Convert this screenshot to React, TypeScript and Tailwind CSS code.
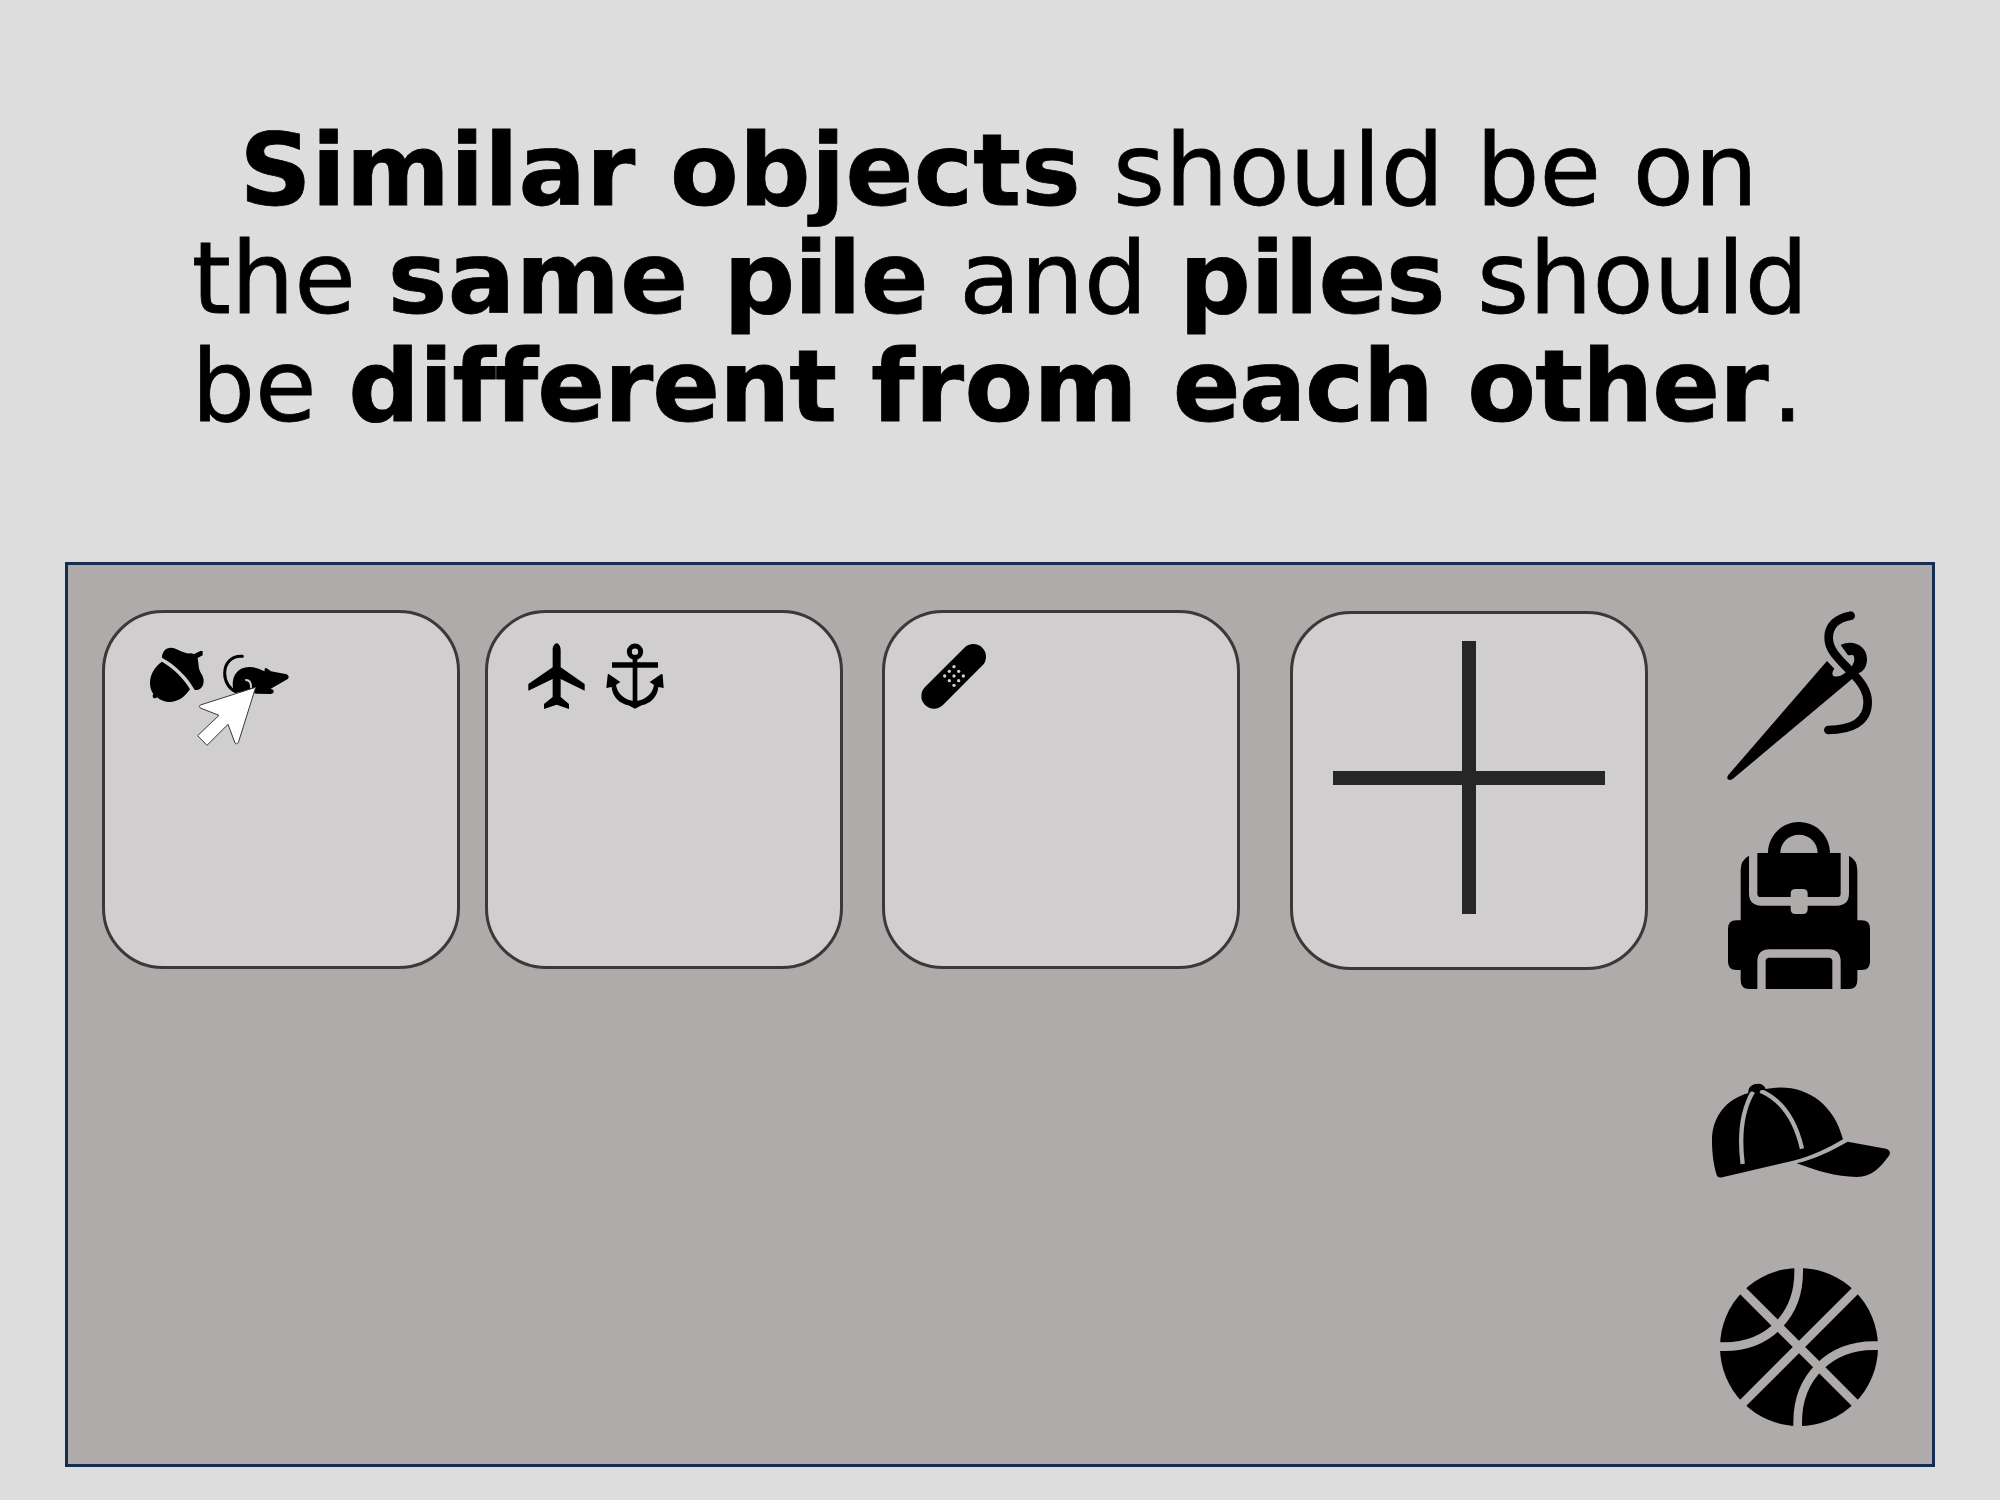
import type { ReactNode } from "react";

function Acorn() {
  return (
    <svg className="h-[60px] w-[60px]" viewBox="165 129 180 180">
      <path d="M216 185C196 199 180 221 180 249C180 262 183 272 190 282C186 287 188 296 196 295L201 292C213 302 226 306 238 306C264 306 282 293 300 268C283 237 251 206 216 185Z" />
      <path d="M216 173C216 155 227 143 243 143C262 144 280 162 302 160Q308 160 311 163L331 153H338V166L323 174L326 197C326 215 341 225 341 242C341 260 331 271 314 270C296 235 256 194 216 173Z" />
    </svg>
  );
}

function Rat() {
  return (
    <svg className="h-[60px] w-[75px]" viewBox="384 129 225 180">
      <path d="M457 169C422 167 404 192 404 220C404 246 419 268 438 275" fill="none" stroke="#000" strokeWidth="9" strokeLinecap="round" />
      <path d="M432 277C421 245 432 201 478 201C497 201 509 207 524 214C523 205 526 201 532 206L543 214L590 223Q601 230 592 238L541 267Q552 267 551 276Q549 282 541 282L500 281L480 277Z" />
      <path d="M468 240Q483 240 483 262" fill="none" stroke="#d0cece" strokeWidth="6" strokeLinecap="round" />
    </svg>
  );
}

function Plane() {
  return (
    <svg className="h-[72px] w-[63px]" viewBox="75 129 189 216">
      <path d="M158 150C158 139 164 130 170 130C176 130 182 139 182 150V202L254 252V272L182 237V291L207 312V327L170 314L132 327V312L158 291V237L85 272V252L158 202Z" />
    </svg>
  );
}

function Anchor() {
  return (
    <svg className="h-[72px] w-[62px]" viewBox="312 129 186 216">
      <circle cx="405" cy="155" r="17" fill="none" stroke="#000" strokeWidth="15" />
      <path d="M336 187H474V203H336ZM398 176H412V310H398Z" />
      <path d="M326 222L361 246L348 255C352 280 372 300 405 304C438 300 458 280 462 255L449 246L484 222Q488 221 488 226L491 264L475 261C472 292 452 310 425 316L405 326L385 316C358 310 338 292 335 261L319 264L323 226Q323 221 326 222Z" />
    </svg>
  );
}

const bandageHoles = [
  [252, 200], [238, 214], [266, 214], [224, 228], [252, 228],
  [280, 228], [238, 242], [266, 242], [252, 256],
];

function Bandage() {
  return (
    <svg className="h-[72px] w-[72px]" viewBox="144 129 216 216">
      <path d="M192 288L310 170" stroke="#000" strokeWidth="76" strokeLinecap="round" />
      {bandageHoles.map(([x, y]) => (
        <circle key={`${x}-${y}`} cx={x} cy={y} r="5" fill="#d0cece" />
      ))}
    </svg>
  );
}

function Pointer() {
  return (
    <svg className="absolute left-[91px] top-[71px] h-[64px] w-[62px]" viewBox="318 252 186 192">
      <path d="M497 262L331 315Q325 319 331 324L387 346L323 407L351 436L414 373L435 429Q440 435 445 428Z" fill="#fff" stroke="#3b3838" strokeWidth="3" />
    </svg>
  );
}

function Needle() {
  return (
    <svg className="h-[210px] w-[200px]" viewBox="0 0 600 630">
      <path d="M381 213L403 236Q393 249 400 258Q416 264 435 249L452 238L462 215Q465 202 459 195L444 196L422 165C458 147 501 166 501 208C501 229 490 246 475 250L456 267L97 568Q89 573 83 567Q80 561 85 555Z" />
      <path d="M452 77C410 84 386 108 386 143C386 180 413 204 454 246C486 278 503 304 503 337C503 397 452 420 385 420" fill="none" stroke="#000" strokeWidth="26" strokeLinecap="round" />
    </svg>
  );
}

function Backpack() {
  return (
    <svg className="h-[210px] w-[200px]" viewBox="0 0 600 630">
      <path d="M204 159C204 108 245 66 297 66C349 66 390 108 390 159H422V281Q422 291 412 291H323V281Q323 267 309 267H286Q272 267 272 281V291H182Q172 291 172 281V159ZM241 159H353C353 128 328 104 297 104C266 104 241 128 241 159Z" fillRule="evenodd" />
      <path d="M147 167V280Q147 317 184 317H272V328Q272 342 286 342H309Q323 342 323 328V317H410Q447 317 447 280V167Q472 180 472 210V361H485Q510 361 510 386V485Q510 510 485 510H472V541Q472 567 447 567H422V485Q422 448 385 448H209Q172 448 172 485V567H147Q122 567 122 541V510H109Q84 510 84 485V386Q84 361 109 361H122V210Q122 180 147 167Z" />
      <path d="M197 567V484Q197 473 208 473H386Q397 473 397 484V567Z" />
    </svg>
  );
}

function Cap() {
  return (
    <svg className="h-[140px] w-[200px]" viewBox="0 0 600 420">
      <path d="M145 99C143 82 157 71 174 71C186 71 194 77 197 87C301 66 398 118 429 238C380 266 334 289 285 301L67 352Q53 355 50 345C42 316 36 285 36 242C36 171 78 118 145 99Z" />
      <path d="M290 310C344 297 393 274 443 245L558 266Q574 271 568 286C540 324 517 350 470 351C410 351 346 331 290 310Z" />
      <path d="M159 95C125 153 117 225 128 312M181 92C249 121 287 184 306 266" fill="none" stroke="#afabab" strokeWidth="13" />
      <path d="M147 96Q172 90 197 89L190 80H150Z" />
    </svg>
  );
}

function Basketball() {
  return (
    <svg className="h-[190px] w-[200px]" viewBox="0 0 600 570">
      <circle cx="297" cy="291" r="237" />
      <path d="M120 114L474 468M474 114L120 468M296 40V66C296 192 209 290 73 290H50M544 287H521C391 287 293 380 293 516V540" fill="none" stroke="#afabab" strokeWidth="26" />
    </svg>
  );
}

function Pile({ className, children }: { className: string; children?: ReactNode }) {
  return (
    <div className={`relative flex w-[358px] shrink-0 items-start rounded-[61px] border-[3px] border-[#3b3838] bg-[#d0cece] ${className}`}>
      {children}
    </div>
  );
}

export default function App() {
  return (
    <main className="flex h-[1500px] w-[2000px] flex-col overflow-hidden bg-[#dddddd] text-black">
      <h1 className="flex h-[562px] shrink-0 flex-col items-center pt-[117px] font-['DejaVu_Sans',Verdana,sans-serif] text-[100px] font-normal leading-[108px] whitespace-nowrap [font-variant-ligatures:none] [-webkit-text-stroke:0.8px_black]">
        <span className="mr-[2px]">
          <b>Similar <span className="tracking-[0.3px]">objects</span></b> should be <span className="tracking-[0.6px]">on</span>
        </span>
        <span>
          the <b><span className="tracking-[0.5px]">same</span> <span className="tracking-[-1px]">pile</span></b> and{" "}
          <b className="tracking-[-0.3px]">piles</b> should
        </span>
        <span className="mr-[5px]">
          be <b><span className="tracking-[-1px]">different</span> <span className="tracking-[0.3px]">from</span>{" "}
          <span className="tracking-[-1.5px]">each</span> <span className="tracking-[-0.9px]">other</span></b>
          <span className="pl-[4px]">.</span>
        </span>
      </h1>
      <section className="ml-[65px] flex h-[905px] w-[1870px] shrink-0 items-start border-[3px] border-[#172c51] bg-[#afabab] pl-[34px]">
        <div className="mt-[45px] flex items-start">
          <Pile className="mr-[25px] h-[359px] gap-[13px] pl-[40px] pt-[30px]">
            <Acorn />
            <Rat />
            <Pointer />
          </Pile>
          <Pile className="mr-[39px] h-[359px] gap-[16px] pl-[37px] pt-[30px]">
            <Plane />
            <Anchor />
          </Pile>
          <Pile className="mr-[50px] h-[359px] pl-[33px] pt-[30px]">
            <Bandage />
          </Pile>
          <Pile className="mt-px h-[359px] pl-[40px] pt-[27px]">
            <svg className="h-[273px] w-[272px]" viewBox="0 0 272 273">
              <path d="M129 0H143V273H129ZM0 130H272V144H0Z" fill="#262626" />
            </svg>
          </Pile>
        </div>
        <aside className="ml-[52px] mt-[25px] flex w-[200px] shrink-0 flex-col">
          <Needle />
          <Backpack />
          <div className="mt-[50px]"><Cap /></div>
          <div className="mt-[50px]"><Basketball /></div>
        </aside>
      </section>
    </main>
  );
}
